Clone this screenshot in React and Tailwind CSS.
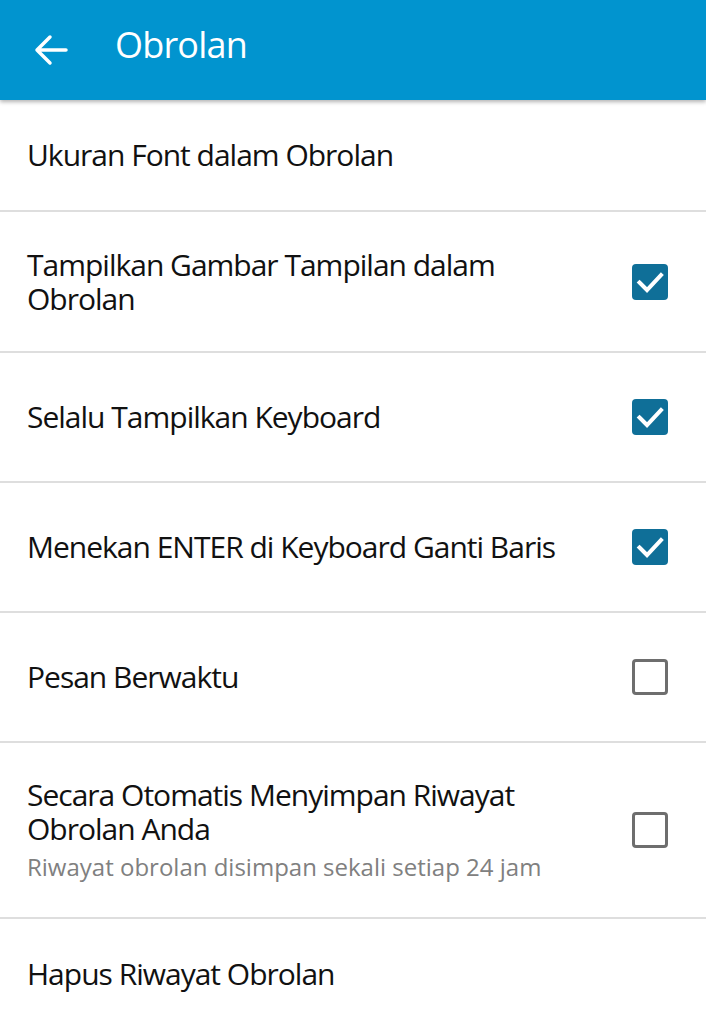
import React from "react";

const font = { fontFamily: "'Open Sans', 'Noto Sans', sans-serif" };

function Check({ checked }) {
  if (checked) {
    return (
      <div className="w-[36px] h-[36px] rounded-[4px] bg-[#0f6f98] flex items-center justify-center shrink-0">
        <svg width="36" height="36" viewBox="0 0 36 36" fill="none">
          <path d="M7.5 18.5 L15 26 L29 11" stroke="white" strokeWidth="4" strokeLinecap="square" strokeLinejoin="miter" />
        </svg>
      </div>
    );
  }
  return <div className="w-[36px] h-[36px] rounded-[4px] border-[3px] border-[#6e6e6e] shrink-0" />;
}

function Row({ title, sub, checked, h }) {
  return (
    <div className={`flex items-center pl-[27px] pr-[38px] border-b-2 border-[#dedede] ${h}`}>
      <div className="flex-1 pr-[35px]">
        <div className="text-[30px] leading-[34px] tracking-[-1px] text-[#111]">{title}</div>
        {sub && <div className="text-[24px] leading-[30px] mt-[6px] text-[#808080]">{sub}</div>}
      </div>
      {checked !== undefined && <Check checked={checked} />}
    </div>
  );
}

export default function App() {
  return (
    <div className="w-[706px] h-[1023px] bg-white overflow-hidden" style={font}>
      <div className="relative z-10 h-[100px] bg-[#0194cf] flex items-center shadow-[0_2px_4px_rgba(0,0,0,0.3)]">
        <div className="w-[115px] pl-[34px] flex items-center">
          <svg width="34" height="34" viewBox="0 0 34 34" fill="none">
            <path d="M3 17 H32 M3 17 L16 4 M3 17 L16 30" stroke="white" strokeWidth="3.5" strokeLinecap="round" strokeLinejoin="round" />
          </svg>
        </div>
        <div className="text-white text-[36px] leading-none tracking-[-0.8px] -mt-[10px]">Obrolan</div>
      </div>
      <Row title="Ukuran Font dalam Obrolan" h="h-[112px]" />
      <Row title="Tampilkan Gambar Tampilan dalam Obrolan" checked={true} h="h-[141px]" />
      <Row title="Selalu Tampilkan Keyboard" checked={true} h="h-[130px]" />
      <Row title="Menekan ENTER di Keyboard Ganti Baris" checked={true} h="h-[130px]" />
      <Row title="Pesan Berwaktu" checked={false} h="h-[130px]" />
      <Row title="Secara Otomatis Menyimpan Riwayat Obrolan Anda" sub="Riwayat obrolan disimpan sekali setiap 24 jam" checked={false} h="h-[176px]" />
      <Row title="Hapus Riwayat Obrolan" h="h-[112px]" />
    </div>
  );
}
